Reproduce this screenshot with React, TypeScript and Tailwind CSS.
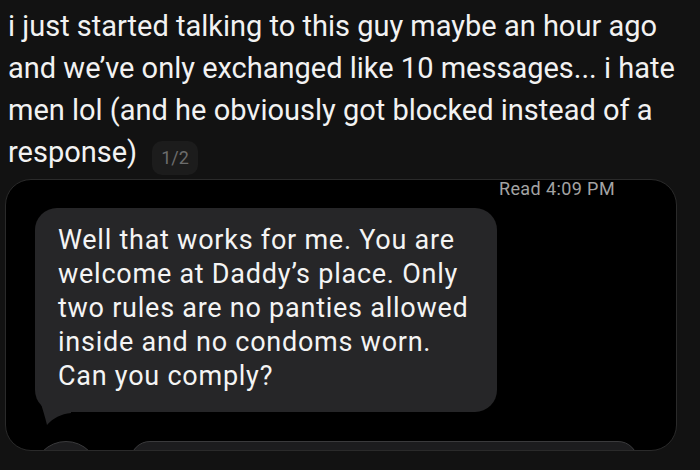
export default function App() {
  return (
    <main className="h-[470px] w-[700px] overflow-hidden bg-[#121212] font-['Roboto',sans-serif]">
      {/* Post text */}
      <p className="whitespace-nowrap pl-[8px] pt-[5px] text-[29px] leading-[42px] tracking-[0px] text-[#f2f2f2]">
        i just started talking to this guy maybe an hour ago
        <br />
        and we’ve only exchanged like 10 messages... i hate
        <br />
        men lol (and he obviously got blocked instead of a
        <br />
        response)
        <span className="ml-[15px] inline-flex h-[34px] items-center rounded-[10px] bg-[#1c1c1c] px-[9px] align-[-2px] text-[18px] tracking-normal text-[#6c6c6c]">
          1/2
        </span>
      </p>

      {/* Screenshot of the conversation */}
      <div className="ml-[5px] mt-[4px] h-[272px] w-[672px] overflow-hidden rounded-[26px] border-[1.5px] border-[#2a2a2a] bg-black">
        <div className="flex justify-end pr-[61px]">
          <span className="text-[18px] leading-[18px] tracking-[0.4px] text-[#a3a3a3]">Read 4:09 PM</span>
        </div>

        <div className="relative ml-[29px] mt-[10px] w-[462px]">
          <div className="rounded-[22px] bg-[#262628] pb-[19px] pl-[23px] pr-[10px] pt-[15px] text-[27px] leading-[34px] tracking-[0.75px] text-[#f4f4f4]">
            Well that works for me. You are
            <br />
            welcome at Daddy’s place. Only
            <br />
            two rules are no panties allowed
            <br />
            inside and no condoms worn.
            <br />
            Can you comply?
          </div>
          {/* bubble tail */}
          <svg
            className="absolute left-0 top-[178px]"
            width="40"
            height="40"
            viewBox="0 0 40 40"
          >
            <path d="M2 0 C4 14 8 22 12 39 C18 32 26 28 36 27 L36 0 Z" fill="#262628" />
          </svg>
        </div>

        {/* compose bar, cut off at the bottom */}
        <div className="mt-[29px] flex items-start gap-[31px] pl-[27px] pr-[38px]">
          <div className="h-[66px] w-[66px] rounded-full border-[1.5px] border-[#3a3a3c] bg-[#1c1c1e]" />
          <div className="h-[40px] flex-1 rounded-[20px] border-[1.5px] border-[#3a3a3c] bg-[#1c1c1e]" />
        </div>
      </div>
    </main>
  );
}
